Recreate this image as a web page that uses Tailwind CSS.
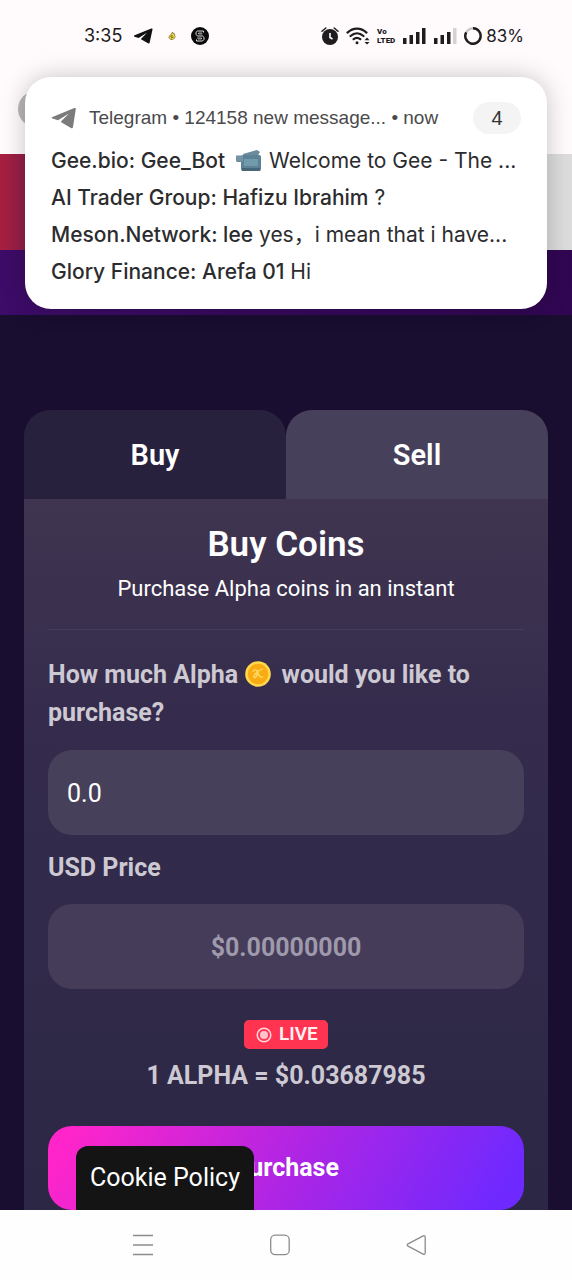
<!DOCTYPE html>
<html lang="en">
<head>
<meta charset="utf-8">
<meta name="viewport" content="width=device-width, initial-scale=1">
<title>Buy Alpha Coins</title>
<script src="https://cdn.jsdelivr.net/npm/@tailwindcss/browser@4"></script>
</head>
<body class="relative flex min-h-screen flex-col bg-[#190d30] font-['Roboto',sans-serif] text-white">

<!-- Status bar and page header -->
<header class="relative h-[154px] shrink-0 bg-[#fffbfc] text-[#1c1a1c]">
  <div class="flex h-18 items-center justify-between pl-21 pr-12 font-['Inter',sans-serif]">
    <div class="flex items-center gap-[11px]">
      <time class="text-[18px] leading-6">3:35</time>
      <svg class="h-4 w-5" viewBox="0 0 20 16" fill="#111"><path d="M18.300.6 1.600 7.200c-.9.4-.8 1.200 0 1.500l4 1.300L14 4.700 8.100 10.700 8 11.300l7 4c.8.4 1.500.1 1.700-.8L19.500 1.500c.2-.8-.4-1.200-1.200-.9Z"/></svg>
      <svg class="h-4 w-4" viewBox="0 0 16 16"><path d="m8.500 4 .6 1.600 1-.3.6 1.700C11.600 8.800 10.800 11 8.300 11.500 6.500 11.800 5 10.800 5 9.300 5 8 5.800 7.300 6.800 7Z" fill="#f1dc3b" stroke="#5d5120" stroke-width=".6"/><path d="m6.500 8.500 2-1m-1.500 2.500 2.300-1" stroke="#3b3214" stroke-width=".8"/></svg>
      <svg class="h-[18px] w-[18px]" viewBox="0 0 18 18"><circle cx="9" cy="9" r="9" fill="#0b0b0b"/><path d="M12.500 5.500V4h-6L5 5.300v2.200L6.500 9h5l1.500 1.400v2L11.500 14h-6v-1.600" fill="none" stroke="#ddd" stroke-width="1"/><path d="M11 6H7.500v1h4M7 12h3.500v-1H6" fill="none" stroke="#ccc" stroke-width=".8"/></svg>
    </div>
    <div class="flex items-center gap-[7px]">
      <svg class="h-[18px] w-[18px]" viewBox="0 0 18 18"><circle cx="9" cy="10" r="8" fill="#1f1c1f"/><path d="M1 4.200 4.800 1M17 4.200 13.200 1" stroke="#1f1c1f" stroke-width="1.500" stroke-linecap="round"/><path d="M9 6v4.500l2.500 1.500" fill="none" stroke="#fff" stroke-width="1.600"/></svg>
      <svg class="h-[18px] w-6" viewBox="0 0 24 18" fill="none" stroke="#1f1c1f" stroke-width="2.200" stroke-linecap="round"><path d="M1.500 5.600c5.600-5.300 13.400-5.300 19 0M4.500 9c4-3.500 9-3.500 13 0M7.600 12.200c2-1.700 4.700-1.700 6.700 0"/><circle cx="11" cy="15.800" r="1.500" fill="#1f1c1f" stroke="none"/><path d="m18.500 13.200 2.500-2.600 2.500 2.600zM18.500 15l2.500 2.600 2.500-2.600z" fill="#1f1c1f" stroke="none"/></svg>
      <span class="flex flex-col font-['Roboto',sans-serif] text-[8px] font-black leading-[9px]"><span>Vo</span><span>LTED</span></span>
      <svg class="h-4 w-6" viewBox="0 0 24 16" fill="#1f1c1f"><path d="M1 10h3.500v6H1zM7.500 7H11v9H7.500zM14 4h3.500v12H14zM20 0h3.500v16H20z"/></svg>
      <svg class="h-4 w-6" viewBox="0 0 24 16" fill="#1f1c1f"><path d="M1 10h3.500v6H1zM7.500 7H11v9H7.500zM14 4h3.500v12H14z"/><path d="M20 0h3.500v16H20z" fill="#d5d1d4"/></svg>
      <span class="flex items-center gap-1 text-[17px] leading-6">
        <svg class="h-[18px] w-[18px]" viewBox="0 0 18 18" fill="none" stroke-width="2.400"><circle cx="9" cy="9" r="7.700" stroke="#c9c6c8"/><path d="M9 1.300a7.700 7.700 0 1 1-6.800 4" stroke="#1f1c1f"/></svg>
        83%
      </span>
    </div>
  </div>
  <div class="absolute left-[18px] top-[91px] h-9 w-9 rounded-full bg-[#b9b7b8]"></div>
</header>

<div class="flex h-24 shrink-0 justify-between bg-[#dddcdd]"><div class="w-1/2 bg-linear-to-r from-[#a91f40] to-[#8e1f49] to-10%"></div></div>
<div class="h-[65px] shrink-0 bg-linear-to-r from-[#3d0c68] to-[#300652]"></div>

<!-- Telegram notification laid over the page -->
<aside class="absolute inset-x-[25px] top-[77px] h-[232px] overflow-hidden rounded-[26px] bg-white px-[26px] pt-[25px] font-['Liberation_Sans',sans-serif] text-[#2c2c2e] shadow-[0_0_24px_rgba(0,0,0,0.22)]">
  <div class="flex h-8 items-center text-[19px] text-[#4a4a4c]">
    <svg class="mr-3 h-[22px] w-[26px] shrink-0" viewBox="0 0 26 22" fill="#7b7b7c"><path d="M23.300 1 1.500 10c-1 .4-.9 1.200 0 1.500l5.500 1.700L18 6.500l-7.800 7.800v1L20 21c1 .5 1.800.1 2-1L24.800 2c.1-.9-.6-1.300-1.500-1Z"/></svg>
    <p class="whitespace-nowrap">Telegram • 124158 new message... • now</p>
    <span class="ml-auto flex h-8 w-12 items-center justify-center rounded-full bg-[#f4f4f5] text-[20px] text-[#333]">4</span>
  </div>
  <ul class="mt-2 whitespace-nowrap font-['Inter','Noto_Sans_CJK_SC',sans-serif] text-[21px] leading-[37px]">
    <li class="flex items-center"><b class="font-medium">Gee.bio: Gee_Bot</b>
      <svg class="ml-2.5 mr-1.5 h-6 w-7 shrink-0" viewBox="0 0 28 24"><path d="m8 5 14-4 3 2-3 5H9z" fill="#6d8b9c"/><path d="M2 7h7v6H2z" fill="#567889"/><rect x="6" y="6" width="20" height="16" rx="2" fill="#5d8295"/><path d="M1 6.500h7v6H1z" fill="#7594a3"/><path d="M9 10h14v7H9z" fill="#719aac"/><path d="M7 19h18v3H7z" fill="#466778"/></svg>
      Welcome to Gee - The ...</li>
    <li><b class="font-medium">AI Trader Group: Hafizu Ibrahim</b> ?</li>
    <li><b class="font-medium">Meson.Network: lee</b> yes，i mean that i have...</li>
    <li><b class="font-medium">Glory Finance: Arefa 01</b> Hi</li>
  </ul>
</aside>

<main class="mt-[95px] flex grow flex-col px-6">
  <div class="grid shrink-0 grid-cols-2 text-[29px] font-semibold">
    <button class="h-[89px] rounded-t-[26px] bg-[#28213d] pt-0.5">Buy</button>
    <button class="h-[89px] rounded-t-[26px] bg-[#47405b] pt-0.5">Sell</button>
  </div>
  <form class="flex grow flex-col bg-linear-to-b from-[#403550] via-[#352c4d] via-30% to-[#2c2745] px-6">
    <h1 class="mt-[26px] text-center text-[35px] font-semibold leading-10">Buy Coins</h1>
    <p class="mt-2 text-center text-[22px] leading-8">Purchase Alpha coins in an instant</p>
    <hr class="mt-6 border-[#463b59]">
    <label for="amount" class="mt-[26px] text-[25px] font-bold leading-[38px] text-[#cdc9d3]">How much Alpha
      <svg class="mr-[3px] inline h-7 w-7 align-[-5px]" viewBox="0 0 28 28"><circle cx="14" cy="14" r="12.800" fill="#ffd84c"/><circle cx="14" cy="14" r="10.300" fill="#f9ab13"/><path d="M9 11.500c1.500-2.500 4-2 4.200.5.200 3-1 6-2.800 5.500-2.500-1 3-7 8.100-8.500m-5.300 1.500c.8 3.500 1.800 7.500 5.300 6.500" fill="none" stroke="#ffdf62" stroke-width="1.300" stroke-linecap="round"/></svg>
      would you like to purchase?</label>
    <input id="amount" type="text" value="0.0" class="mt-[18px] h-[85px] w-full rounded-[24px] bg-[#47405a] px-[19px] pt-0.5 text-[25px] text-white outline-none">
    <label for="price" class="mt-[14px] text-[25px] font-bold leading-[38px] text-[#cdc9d3]">USD Price</label>
    <input id="price" type="text" value="$0.00000000" readonly class="mt-[17px] h-[85px] w-full rounded-[24px] bg-[#453c59] pt-0.5 text-center text-[25px] font-bold text-[#9f99ac] outline-none">
    <div class="mt-[31px] flex h-[29px] w-[84px] items-center gap-[7px] self-center rounded-[5px] bg-[#ff3450] pl-3 text-[19px] font-semibold text-[#fff0f2]">
      <svg class="h-4 w-4 shrink-0" viewBox="0 0 16 16"><circle cx="8" cy="8" r="6.800" fill="none" stroke="#ffd9de" stroke-width="1.500"/><circle cx="8" cy="8" r="4" fill="#ffc3cb"/></svg>LIVE
    </div>
    <p class="mt-2 text-center text-[25px] font-bold leading-[38px] text-[#cdc9d3]">1 ALPHA = $0.03687985</p>
    <button class="mt-[31px] h-[84px] w-full rounded-[24px] bg-[linear-gradient(120deg,#ff25ca_5%,#b025e4_50%,#6d29ff_95%)] text-[25px] font-bold">Purchase</button>
  </form>
</main>

<a href="#" class="absolute bottom-[70px] left-[76px] flex h-16 w-[178px] items-center justify-center whitespace-nowrap rounded-t-xl bg-[#141414] text-[25px]">Cookie Policy</a>

<!-- System navigation -->
<nav class="flex h-[70px] shrink-0 items-center bg-[#fefefe]">
  <div class="flex w-full items-center justify-between pl-[132px] pr-[145px]">
    <button aria-label="Recent apps"><svg class="h-[22px] w-[22px]" viewBox="0 0 22 22" stroke="#8c8c8c" stroke-width="1.300"><path d="M1 1.500h20M1 11h20M1 20.500h20"/></svg></button>
    <button aria-label="Home"><svg class="h-[22px] w-[22px]" viewBox="0 0 22 22" fill="none" stroke="#8c8c8c" stroke-width="1.300"><rect x="1.700" y="1.200" width="18.500" height="19.500" rx="4.500"/></svg></button>
    <button aria-label="Back"><svg class="h-[22px] w-[22px]" viewBox="0 0 22 22" fill="none" stroke="#8c8c8c" stroke-width="1.300"><path d="M18.200 1.800 3 9.800c-1 .6-1 1.800 0 2.400l15.200 8c1 .5 2 0 2-1.200V3c0-1.200-1-1.700-2-1.200Z"/></svg></button>
  </div>
</nav>
</body>
</html>
